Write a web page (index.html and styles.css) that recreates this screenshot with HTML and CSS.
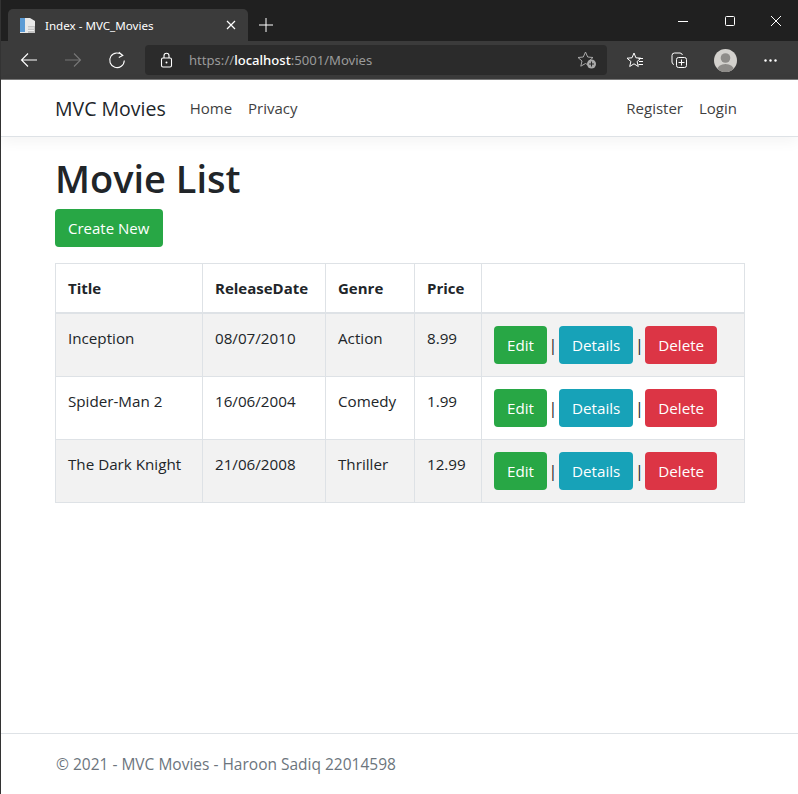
FILE: index.html
```html
<!DOCTYPE html>
<html lang="en">

<head>
    <meta charset="UTF-8">
    <title>Index - MVC_Movies</title>
    <link rel="stylesheet" href="styles.css">
</head>

<body>
    <div class="window">
        <!-- browser chrome -->
        <div class="tabstrip">
            <div class="tab">
                <svg class="favicon" width="18" height="18" viewBox="0 0 18 18">
                    <path d="M1 2h10l5 3v12H1z" fill="#e8e8e8" />
                    <path d="M1 2h5v14H1z" fill="#5b9bd5" />
                    <path d="M9 10h7v7H9z" fill="#c4c4c4" />
                    <path d="M9 12h6M9 14.500h6" stroke="#f2f2f2" stroke-width="1" />
                </svg>
                <span class="tab-title">Index - MVC_Movies</span>
                <svg class="tab-close" width="10" height="10" viewBox="0 0 10 10">
                    <path d="M1 1l8 8M9 1l-8 8" stroke="#fff" stroke-width="1.2" />
                </svg>
            </div>
            <svg class="new-tab" width="14" height="14" viewBox="0 0 14 14">
                <path d="M7 0v14M0 7h14" stroke="#fff" stroke-width="1" />
            </svg>
            <div class="win-controls">
                <svg width="10" height="10" viewBox="0 0 10 10">
                    <path d="M0 5.500h10" stroke="#fff" stroke-width="1" />
                </svg>
                <svg width="10" height="10" viewBox="0 0 10 10">
                    <rect x=".5" y=".5" width="9" height="9" rx="1" fill="none" stroke="#fff" />
                </svg>
                <svg width="10" height="10" viewBox="0 0 10 10">
                    <path d="M0 0l10 10M10 0L0 10" stroke="#fff" stroke-width="1" />
                </svg>
            </div>
        </div>
        <div class="toolbar">
            <svg class="tool-back" width="18" height="16" viewBox="0 0 18 16">
                <path d="M17 8H1.500M8 1.500L1.500 8 8 14.500" fill="none" stroke="#fff" stroke-width="1.1" />
            </svg>
            <svg class="tool-forward" width="18" height="16" viewBox="0 0 18 16">
                <path d="M1 8h15.500M10 1.500L16.500 8 10 14.500" fill="none" stroke="#777" stroke-width="1.1" />
            </svg>
            <svg class="tool-reload" width="18" height="18" viewBox="0 0 18 18">
                <path d="M14.500 4.500A7.300 7.300 0 1 0 16.300 9.500M10.800 1.200l4 3.300-4 2" fill="none" stroke="#fff" stroke-width="1.100" />
            </svg>
            <div class="address">
                <svg class="lock" width="14" height="16" viewBox="0 0 14 16">
                    <rect x="1.500" y="6" width="10" height="9" rx="1.500" fill="none" stroke="#fff" stroke-width="1.100" />
                    <path d="M4 6V3.800a2.500 2.500 0 0 1 5 0V6" fill="none" stroke="#fff" stroke-width="1.100" />
                    <circle cx="6.500" cy="10.500" r="1" fill="#fff" />
                </svg>
                <span class="url">https://<b>localhost</b>:5001/Movies</span>
                <svg class="fav-add" width="20" height="18" viewBox="0 0 20 18">
                    <path d="M8.500 1l2.200 5 5.300.5-4 3.500 1.200 5.200-4.700-2.700-4.700 2.700L5 10 1 6.500 6.300 6z" fill="none" stroke="#aaa" stroke-width="1" />
                    <circle cx="14.500" cy="13" r="4.500" fill="#aaa" />
                    <path d="M14.500 10.500v5M12 13h5" stroke="#2b2b2b" stroke-width="1.100" />
                </svg>
            </div>
            <div class="tool-right">
                <svg width="18" height="16" viewBox="0 0 18 16">
                    <path d="M8 1l1.900 4.800 5 .4-3.800 3.300 1.200 5L8 11.800l-4.300 2.700 1.200-5L1 6.200l5-.4z" fill="none" stroke="#fff" stroke-width="1" />
                    <path d="M12.500 6.500h4.500M13 9.500h4M12.500 12.500h4.500" stroke="#fff" stroke-width="1" />
                </svg>
                <svg width="17" height="17" viewBox="0 0 17 17">
                    <path d="M3 12.500A2.500 2.500 0 0 1 1 10V3.500A2.500 2.500 0 0 1 3.500 1H9a2.500 2.500 0 0 1 2.400 2" fill="none" stroke="#fff" stroke-width="1" />
                    <rect x="5.500" y="5.500" width="10" height="10" rx="2" fill="none" stroke="#fff" stroke-width="1" />
                    <path d="M10.500 7.500v6M7.500 10.500h6" stroke="#fff" stroke-width="1" />
                </svg>
                <svg class="avatar" width="23" height="23" viewBox="0 0 23 23">
                    <defs>
                        <clipPath id="avatar-clip">
                            <circle cx="11.500" cy="11.500" r="11.500" />
                        </clipPath>
                    </defs>
                    <circle cx="11.500" cy="11.500" r="11.500" fill="#d3d1cd" />
                    <g clip-path="url(#avatar-clip)">
                        <circle cx="11.500" cy="9" r="4.800" fill="#8e8c89" />
                        <ellipse cx="11.500" cy="21" rx="8.500" ry="6" fill="#8e8c89" />
                    </g>
                </svg>
                <svg class="more" width="13" height="3" viewBox="0 0 13 3">
                    <circle cx="1.500" cy="1.500" r="1.200" fill="#fff" />
                    <circle cx="6.500" cy="1.500" r="1.200" fill="#fff" />
                    <circle cx="11.500" cy="1.500" r="1.200" fill="#fff" />
                </svg>
            </div>
        </div>

        <!-- the page itself -->
        <div class="page">
            <header class="navbar">
                <a class="brand">MVC Movies</a>
                <a class="nav-link">Home</a>
                <a class="nav-link">Privacy</a>
                <div class="nav-right">
                    <a class="nav-link">Register</a>
                    <a class="nav-link">Login</a>
                </div>
            </header>

            <main>
                <h1>Movie List</h1>
                <a class="btn btn-success btn-create">Create New</a>
                <table>
                    <colgroup>
                        <col class="col-title">
                        <col class="col-date">
                        <col class="col-genre">
                        <col class="col-price">
                        <col>
                    </colgroup>
                    <thead>
                        <tr>
                            <th>Title</th>
                            <th>ReleaseDate</th>
                            <th>Genre</th>
                            <th>Price</th>
                            <th></th>
                        </tr>
                    </thead>
                    <tbody>
                        <tr>
                            <td>Inception</td>
                            <td>08/07/2010</td>
                            <td>Action</td>
                            <td>8.99</td>
                            <td>
                                <div class="actions">
                                    <a class="btn btn-success">Edit</a>
                                    <span class="sep">|</span>
                                    <a class="btn btn-info">Details</a>
                                    <span class="sep">|</span>
                                    <a class="btn btn-danger">Delete</a>
                                </div>
                            </td>
                        </tr>
                        <tr>
                            <td>Spider-Man 2</td>
                            <td>16/06/2004</td>
                            <td>Comedy</td>
                            <td>1.99</td>
                            <td>
                                <div class="actions">
                                    <a class="btn btn-success">Edit</a>
                                    <span class="sep">|</span>
                                    <a class="btn btn-info">Details</a>
                                    <span class="sep">|</span>
                                    <a class="btn btn-danger">Delete</a>
                                </div>
                            </td>
                        </tr>
                        <tr>
                            <td>The Dark Knight</td>
                            <td>21/06/2008</td>
                            <td>Thriller</td>
                            <td>12.99</td>
                            <td>
                                <div class="actions">
                                    <a class="btn btn-success">Edit</a>
                                    <span class="sep">|</span>
                                    <a class="btn btn-info">Details</a>
                                    <span class="sep">|</span>
                                    <a class="btn btn-danger">Delete</a>
                                </div>
                            </td>
                        </tr>
                    </tbody>
                </table>
            </main>

            <footer>© 2021 - MVC Movies - Haroon Sadiq 22014598</footer>
        </div>
    </div>
</body>

</html>
```

FILE: styles.css
```css
* {
    box-sizing: border-box;
}

html,
body {
    height: 100%;
}

body {
    margin: 0;
    background-color: #fff;
    color: #212529;
    font-family: "Open Sans", "Noto Sans", Arial, sans-serif;
    font-size: 15px;
    overflow: hidden;
}

.window {
    height: 794px;
    display: flex;
    flex-direction: column;
    border-left: 1px solid #333;
}

/* browser chrome */
.tabstrip {
    height: 41px;
    flex: none;
    display: flex;
    align-items: flex-end;
    background-color: #202020;
    padding-left: 7px;
}

.tab {
    width: 240px;
    height: 32px;
    display: flex;
    align-items: center;
    background-color: #3b3b3b;
    border-radius: 5px 5px 0 0;
    padding: 0 12px 0 11px;
    color: #fff;
    font-family: "Noto Sans", sans-serif;
    font-size: 11.6px;
}

.tab-title {
    margin-left: 8px;
    flex: 1;
}

.new-tab {
    margin: 0 0 9px 11px;
}

.win-controls {
    margin-left: auto;
    align-self: flex-start;
    display: flex;
    gap: 36.500px;
    padding: 16px 17px 0 0;
}

.toolbar {
    height: 39px;
    flex: none;
    display: flex;
    align-items: center;
    background-color: #3b3b3b;
    border-bottom: 1px solid #7a7a7a;
    padding-left: 19px;
}

.tool-forward {
    margin-left: 26px;
}

.tool-reload {
    margin-left: 26px;
}

.address {
    width: 462px;
    height: 30px;
    margin-left: 19px;
    display: flex;
    align-items: center;
    background-color: #2b2b2b;
    border-radius: 4px;
    padding: 0 10px 0 15px;
}

.url {
    margin-left: 15px;
    flex: 1;
    color: #9a9a9a;
    font-family: "Noto Sans", sans-serif;
    font-size: 13.100px;
}

.url b {
    color: #fff;
    font-weight: 500;
}

.tool-right {
    display: flex;
    align-items: center;
    margin-left: 19px;
}

.tool-right svg + svg {
    margin-left: 27px;
}

.tool-right .avatar {
    margin-left: 26px;
}

.tool-right .more {
    margin-left: 27px;
}

/* page */
.page {
    flex: 1;
    display: flex;
    flex-direction: column;
    min-height: 0;
}

.navbar {
    height: 57px;
    flex: none;
    display: flex;
    align-items: center;
    border-bottom: 1px solid #dee2e6;
    box-shadow: 0 4px 14px rgba(0, 0, 0, .05);
    padding: 0 53px 0 54px;
}

.brand {
    font-size: 19.500px;
    color: #212529;
    margin-right: 16px;
}

.nav-link {
    padding: 0 8px;
    color: #3f3f3f;
}

.nav-right {
    margin-left: auto;
    display: flex;
}

main {
    flex: 1;
    padding: 16px 53px 0 54px;
}

h1 {
    margin: 0 0 5px;
    font-size: 38px;
    font-weight: 600;
    line-height: 51px;
}

.btn {
    display: inline-block;
    height: 38px;
    line-height: 36px;
    padding: 0 12px;
    border: 1px solid transparent;
    border-radius: 4px;
    color: #fff;
}

.btn-create {
    padding-right: 13px;
}

.btn-success {
    background-color: #28a745;
}

.btn-info {
    background-color: #17a2b8;
}

.btn-danger {
    background-color: #dc3545;
}

table {
    width: 690px;
    margin-top: 16px;
    table-layout: fixed;
    border-collapse: collapse;
}

.col-title {
    width: 147px;
}

.col-date {
    width: 123px;
}

.col-genre {
    width: 89px;
}

.col-price {
    width: 67px;
}

th,
td {
    border: 1px solid #dee2e6;
    padding: 12px;
    text-align: left;
    vertical-align: top;
}

th {
    height: 49px;
    font-weight: 700;
    line-height: 24px;
    vertical-align: middle;
    border-bottom-width: 2px;
}

td {
    height: 63px;
    font-size: 15.200px;
    line-height: 25px;
}

tbody tr:nth-child(odd) {
    background-color: #f2f2f2;
}

.actions {
    display: flex;
    align-items: center;
}

.sep {
    width: 12px;
    text-align: center;
    font-size: 16px;
    color: #212529;
}

footer {
    height: 61px;
    flex: none;
    border-top: 1px solid #dee2e6;
    color: #6c757d;
    font-size: 15.500px;
    padding: 19px 55px 0;
}
```
